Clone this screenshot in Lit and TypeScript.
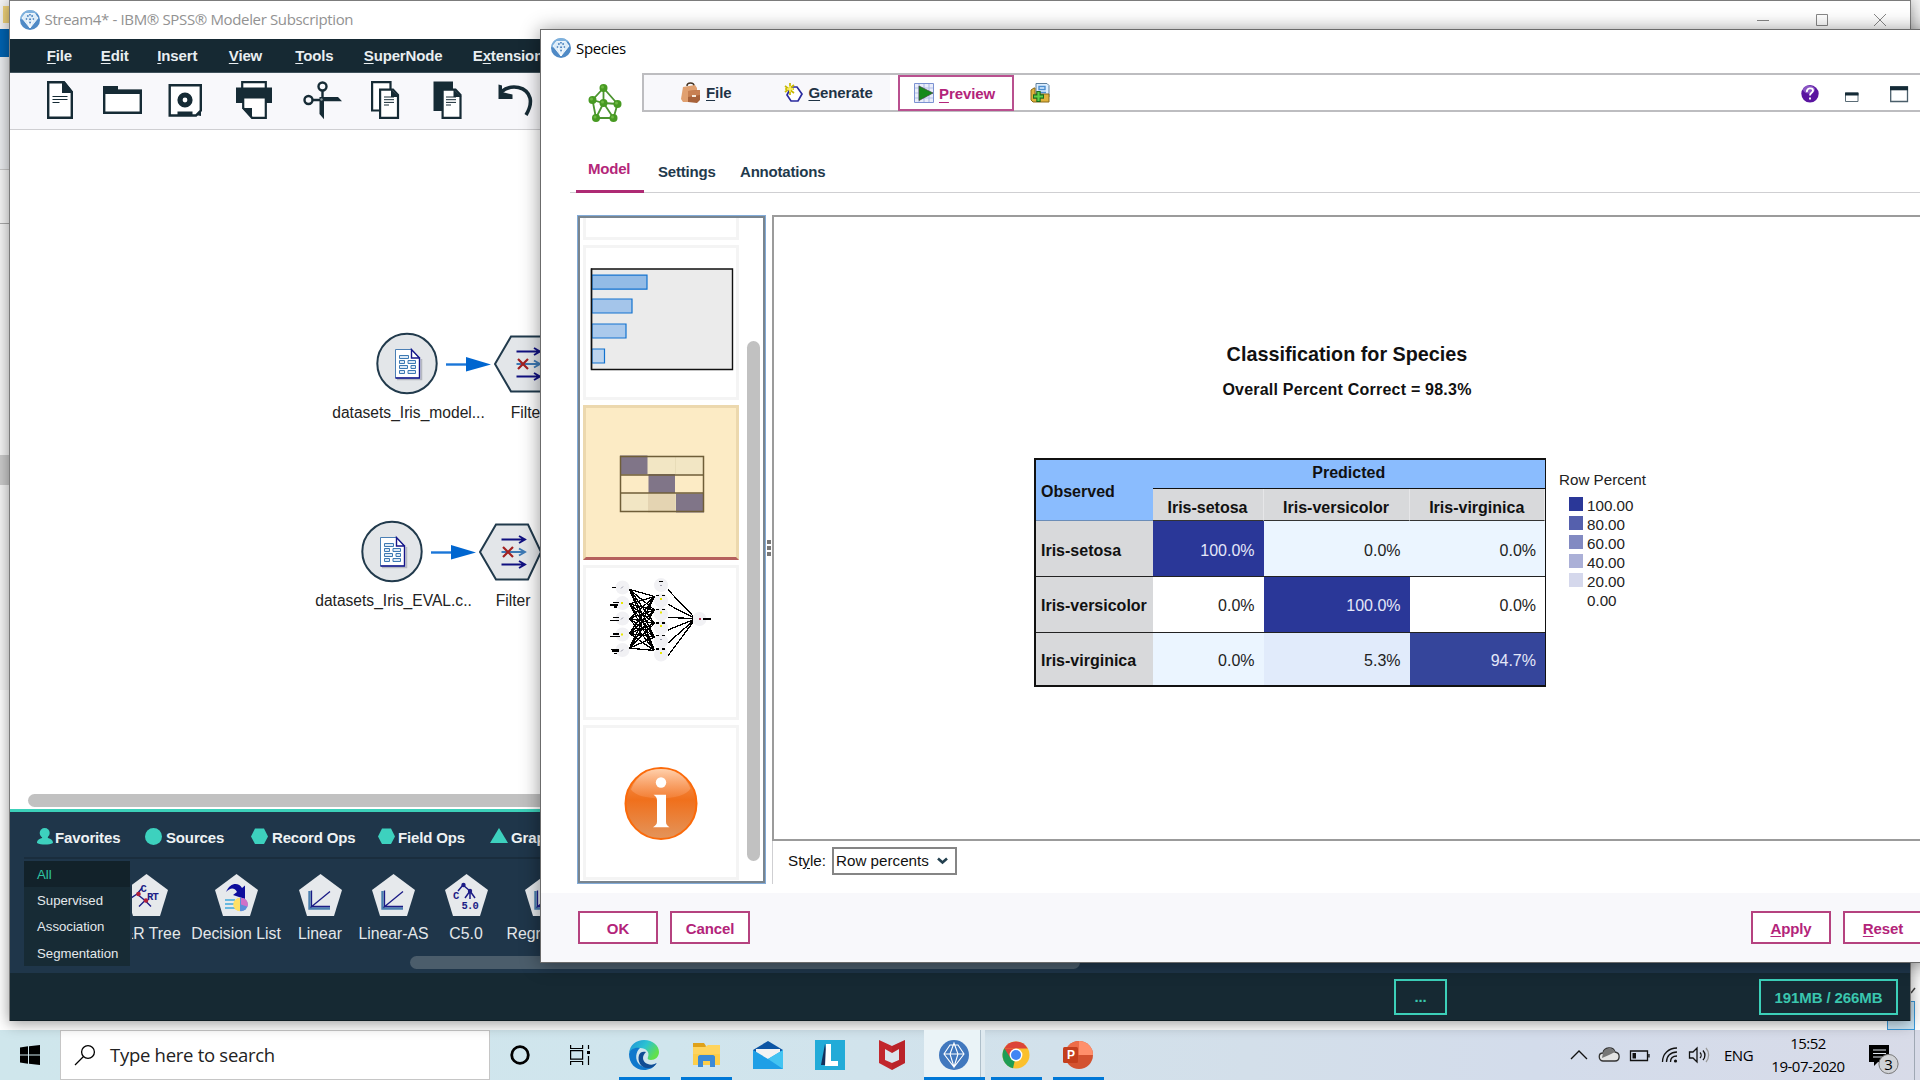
import { LitElement, html, svg, css } from "lit";
import { customElement } from "lit/decorators.js";
import { classMap } from "lit/directives/class-map.js";

const base = css`
  * { box-sizing: border-box; }
  svg { display: block; overflow: visible; flex: none; }
  u { text-decoration: underline; text-underline-offset: 2px; text-decoration-thickness: 1px; }
`;

const gem = (size: number, w = size) => html`
  <svg width=${w} height=${size} viewBox="0 0 20 20" preserveAspectRatio="none">
    <circle cx="10" cy="10" r="10" fill="#4f8ac6" />
    <path d="M0 9A10 10 0 0 1 17 3L14 8 10 3 4 10z" fill="#8dbde4" opacity=".75" />
    <path d="M5.5 3.5h9L18 8l-8 10L2 8z" fill="#dcecf8" />
    <path d="M5.5 3.5h9L18 8l-8 10L2 8zM6.500 8l3.500 10L13.500 8" fill="none" stroke="#fff" stroke-width=".8" />
    <path d="M7 6h1.700M11.300 6H13M9.200 9.200h1.700M5.800 9h1.400M12.700 9h1.400M9.300 12.500h1.500M9.200 4.800h1.500" stroke="#3f79b8" stroke-width="1.400" />
  </svg>`;

/* ---------- main window ---------- */

const MENU = [["", "F", "ile"], ["", "E", "dit"], ["", "I", "nsert"], ["", "V", "iew"], ["", "T", "ools"], ["", "S", "uperNode"], ["E", "x", "tensions"]];

const toolIcons = [
  svg`<path d="M48.200 82.200H64L71.800 92V117.800H48.200z" fill="#fff" stroke="#162b35" stroke-width="2.400"/><path d="M62 82h3l8 10v1H62z" fill="#162b35"/><path d="M52.500 96.500h15M52.500 99.500h15M52.500 102.500h7" stroke="#162b35" stroke-width="1.100"/>`,
  svg`<path d="M104.200 91H140.800V112.800H104.200z" fill="#fff" stroke="#162b35" stroke-width="2.400"/><path d="M103 86h15v3.500h24V94H103z" fill="#162b35"/>`,
  svg`<path d="M169.700 85.200H200.800V110.500L196 115.500H169.700z" fill="#fff" stroke="#162b35" stroke-width="2.400"/><circle cx="185" cy="100" r="5" fill="#fff" stroke="#162b35" stroke-width="5.200"/><path d="M177.500 111.500h15v4h-15zM195.500 115l5.500-5v6z" fill="#162b35"/>`,
  svg`<path d="M242.200 82.200h23.600V92h-23.600z" fill="#fff" stroke="#162b35" stroke-width="2.200"/><path d="M236 87.500h36V103h-36z" fill="#162b35"/><path d="M243.200 97.500h22.600V117.800H252L243.200 108z" fill="#fff" stroke="#162b35" stroke-width="2.200"/><path d="M242 108h10v10z" fill="#162b35"/>`,
  svg`<g fill="none" stroke="#162b35" stroke-width="2.400"><circle cx="322.500" cy="86.500" r="4"/><circle cx="308.500" cy="100" r="4"/><path d="M322.500 90.500V98M312.500 100H320"/></g><path d="M319.500 97H338l4 4.300H324v18L319.500 114z" fill="#162b35"/><circle cx="321.500" cy="99.500" r="1.200" fill="#8d989d"/>`,
  svg`<path d="M372.100 82.100H390.500V110.500H372.100z" fill="#fff" stroke="#162b35" stroke-width="2.200"/><path d="M380.100 89.600H393L398 95V117.800H380.100z" fill="#fff" stroke="#162b35" stroke-width="2.200"/><path d="M391 89l8 8h-8z" fill="#162b35"/><path d="M384 97h10M384 99.700h10M384 102.400h10M384 105h5" stroke="#162b35"/>`,
  svg`<path d="M433.500 81.500H453V111H433.500z" fill="#162b35"/><path d="M442.600 89.600H455.500L460.500 95V117.800H442.600z" fill="#fff" stroke="#162b35" stroke-width="2.200"/><path d="M453.500 89l8 8h-8z" fill="#162b35"/><path d="M446 97h10M446 99.700h10M446 102.400h10M446 105h5" stroke="#162b35"/>`,
  svg`<path d="M501 92C512 83 527 87 530 98 531.500 104 529 110 526 115" fill="none" stroke="#162b35" stroke-width="3.600"/><path d="M498.500 84.500l3.500 1v6.500l10.500 2.500v4.500h-14z" fill="#162b35"/>`,
];

const sourceNode = (cx: number, cy: number, label: string) => svg`
  <circle cx=${cx} cy=${cy} r="29.700" fill="#e3e6e9" stroke="#213a4c" stroke-width="2"/>
  <g transform="translate(${cx - 12} ${cy - 14.500})">
    <path d="M2 30.500h24.500V10" fill="none" stroke="#b4b8c0" stroke-width="1.500"/>
    <path d="M.5.500h16l8 8.500v20H.5z" fill="#fff" stroke="#4a7fb5"/>
    <path d="M.5 29H24.500V9H16.500V.5l8 8.500" fill="none" stroke="#16168a" stroke-width="1.400"/>
    <g fill="#dce9f5" stroke="#3d79b3"><path d="M4.500 6.500h9v3h-9zM4.500 11.500h5v3h-5zM13 11.500h7.500v3H13zM4.500 16.500h8v3h-8zM16 16.500h4.500v3H16zM4.500 21.500h5v3h-5zM13 21.500h7.500v3H13z"/></g>
  </g>
  <text x=${cx + 1.500} y=${cy + 54.500} text-anchor="middle" class="lbl">${label}</text>`;

const filterNode = (cx: number, cy: number) => svg`
  <path d="M${cx - 30} ${cy}L${cx - 14} ${cy - 27.500}H${cx + 18}L${cx + 31} ${cy}L${cx + 18} ${cy + 27.500}H${cx - 14}z" fill="#e3e6e9" stroke="#213a4c" stroke-width="2"/>
  <g fill="none">
    <path d="M${cx - 8.500} ${cy - 12.500}h24M${cx + 9} ${cy - 16}l6 3.500-6 3.500M${cx - 8.500} ${cy + 12.500}h24M${cx + 9} ${cy + 9}l6 3.500-6 3.500" stroke="#101080" stroke-width="1.900"/>
    <path d="M${cx - 8.500} ${cy}h24M${cx + 9} ${cy - 3.500}l6 3.500-6 3.500" stroke="#3d7ab5" stroke-width="1.900"/>
    <path d="M${cx - 7} ${cy - 5}l10 10m0-10l-10 10" stroke="#a32020" stroke-width="2.200"/>
  </g>
  <text x=${cx + 3} y=${cy + 54} text-anchor="middle" class="lbl">Filter</text>`;

const link = (x: number, y: number) => svg`
  <path d="M${x} ${y}h24" stroke="#1a76d8" stroke-width="2.400"/><path d="M${x + 20} ${y - 7.500}L${x + 45} ${y}L${x + 20} ${y + 7}z" fill="#0066d0"/>`;

const axes = svg`<path d="M10.500 17V34.500H31" fill="none" stroke="#4a7fae" stroke-width="2.400"/><path d="M11.500 33.500L31 17.500M12.500 16.500V32.500H31" stroke="#1c1c86" stroke-width="1.300" fill="none"/>`;

const MODELS = [
  { label: "C&R Tree", x: 146.5, art: svg`<g stroke="#1c1c86" stroke-width="1.400" fill="none"><path d="M12 20l8 6.500M12 20l-6 4M12 20l5-6M20 26.500l-6 6M20 26.500l6 6"/></g><circle cx="13.500" cy="20" r="2.300" fill="#b0203a"/><circle cx="21" cy="26.500" r="2.300" fill="#b0203a"/><text x="15.500" y="18" class="mono">C</text><text x="22" y="26" class="mono">RT</text>` },
  { label: "Decision List", x: 236.5, art: svg`<path d="M11 18C15 8 24 8 27 14l3-2.500V25L18 21l4-3C19 13 15 14 11 18z" fill="#0d0d9c"/><path d="M10 26h10M10 30h10M10 34h10" stroke="#3fa9dc" stroke-width="1.700"/><circle cx="26" cy="30.500" r="6.800" fill="#5b8ed8"/><path d="M26 23.700a6.800 6.800 0 0 1 6.500 9L26 30.500z" fill="#d070c8"/><path d="M25 23.700a6.800 6.800 0 0 0 0 13.600z" fill="#ffe066"/>` },
  { label: "Linear", x: 320.5, art: axes },
  { label: "Linear-AS", x: 394, art: axes },
  { label: "C5.0", x: 466.5, art: svg`<path d="M18 11l-5 6M18 11l7 6M25 17l-5 7M25 17v8M25 17l5 7" stroke="#1c1c86" stroke-width="1.500"/><circle cx="18.500" cy="11" r="2.200" fill="#1c1c86"/><circle cx="25" cy="17" r="2.200" fill="#1c1c86"/><text x="8" y="25" class="mono">C</text><text x="16.500" y="34.500" class="mono">5.0</text>` },
  { label: "Regression", x: 547, art: axes },
];

@customElement("stream-window")
export class StreamWindow extends LitElement {
  static styles = [base, css`
    :host { display: flex; flex-direction: column; width: 1902px; height: 1021px; border: solid #7c7c7c; border-width: 1px 1px 0 1px; background: #fff; box-shadow: 0 2px 14px rgba(0,0,0,.42); font-family: "Liberation Sans", Arial, sans-serif; overflow: hidden; }
    .title { height: 38px; display: flex; align-items: center; padding-left: 10px; font: 15px/36px "Open Sans", "Noto Sans", sans-serif; color: #929292; letter-spacing: -.35px; }
    .title span { margin: 0 auto 2px 4.500px; white-space: nowrap; }
    .ctl { display: grid; grid-template-columns: 58px 59px 58px; height: 38px; place-items: center; margin-right: 1px; }
    .menu { height: 34px; flex: none; background: #162933; border-bottom: 1px solid #40525b; display: grid; grid-template-columns: 54px 56.500px 71.500px 66.500px 68.500px 109px 100px; padding-left: 36.800px; font: bold 15px/34px "Liberation Sans", sans-serif; letter-spacing: -.15px; color: #e9eef1; }
    .tools { height: 57px; flex: none; background: #f8f8fb; border-bottom: 1px solid #cfcfd2; }
    .canvas { height: 679px; flex: none; display: flex; flex-direction: column; background: #fff; }
    .lbl { font: 15.600px "Liberation Sans", sans-serif; fill: #222; }
    .mono { font: bold 10.500px "Liberation Mono", monospace; fill: #1c1c86; letter-spacing: -.8px; }
    .hscroll { height: 13px; margin: 0 20px 2px 18px; border-radius: 7px; background: #c1c1c1; flex: none; }
    .palette { height: 164px; flex: none; border-top: 3px solid #3cd0b9; background: #1f364a; padding-left: 14px; }
    .tabs { height: 47px; border-bottom: 2px solid #1a2d3d; display: grid; grid-template-columns: 108px 106px 127px 112px 120px; padding-left: 13px; font: bold 15px/49px "Liberation Sans", sans-serif; letter-spacing: -.15px; color: #eef2f4; }
    .tab { display: flex; align-items: center; gap: 3px; white-space: nowrap; height: 48px; }
    .tab span { padding-top: 2px; }
    .body { display: flex; height: 114px; }
    .groups { width: 106px; height: 105px; margin-top: 2px; background: #172b35; color: #e4e9ec; font-size: 13.200px; letter-spacing: 0; }
    .group { height: 26.200px; line-height: 27px; padding-left: 13px; }
    .group.on { background: #12222a; color: #2fc7a4; }
    .strip { position: relative; width: 1700px; margin-left: 2px; overflow: hidden; }
    .model { position: absolute; top: 15px; width: 120px; margin-left: -60px; display: flex; flex-direction: column; align-items: center; gap: 7px; font: 15.800px/22px "Liberation Sans", sans-serif; color: #e4e8ea; white-space: nowrap; }
    .thumb { position: absolute; left: 278px; top: 97px; width: 670px; height: 13px; border-radius: 7px; background: #4b5d6b; }
    .status { height: 48px; flex: none; background: #162933; border-bottom: 1px solid #0e1c23; display: flex; justify-content: flex-end; padding: 6px 12px 0 0; gap: 312px; }
    .chip { height: 36px; border: 2px solid #3cd0b9; color: #3ac6ae; font: bold 15px/33px "Liberation Sans", sans-serif; letter-spacing: -.1px; text-align: center; width: 139px; }
    .chip.dots { width: 53px; line-height: 32px; }
  `];

  private tab(shape: unknown, name: string, w = 18) {
    return html`<div class="tab"><svg width=${w} height="17" viewBox="0 0 ${w} 17" fill="#3dd1be">${shape}</svg><span>${name}</span></div>`;
  }

  render() {
    return html`
      <div class="title">${gem(20)}<span>Stream4* - IBM® SPSS® Modeler Subscription</span>
        <div class="ctl">
          <svg width="12" height="12"><path d="M0 6.500h12" stroke="#888"/></svg>
          <svg width="12" height="12"><path d="M.5.500h11v11H.5z" fill="none" stroke="#888"/></svg>
          <svg width="12" height="12"><path d="M0 0l12 12M12 0L0 12" stroke="#888"/></svg>
        </div>
      </div>
      <div class="menu">${MENU.map(([a, b, c]) => html`<span>${a}<u>${b}</u>${c}</span>`)}</div>
      <div class="tools"><svg width="540" height="56" viewBox="10 73 540 56">${toolIcons}</svg></div>
      <div class="canvas">
        <svg width="560" height="664" viewBox="10 130 560 664">
          ${sourceNode(407, 363.5, "datasets_Iris_model...")}${link(446, 364.5)}${filterNode(525, 364)}
          ${sourceNode(392, 551.5, "datasets_Iris_EVAL.c..")}${link(431, 552.5)}${filterNode(510, 552)}
        </svg>
        <div class="hscroll"></div>
      </div>
      <div class="palette">
        <div class="tabs">
          ${this.tab(svg`<circle cx="7.700" cy="5" r="5"/><path d="M5.500 7h4.500l1 3c4 1 5 3 5 5-4 2-12 2-16 0 0-2 1-4 5-5z"/>`, "Favorites", 15)}
          ${this.tab(svg`<circle cx="8.500" cy="8.500" r="8.500"/>`, "Sources")}
          ${this.tab(svg`<path d="M4 .5h9L17 8.500l-4 7.500H4L0 8.500z"/>`, "Record Ops")}
          ${this.tab(svg`<path d="M4 .5h9L17 8.500l-4 7.500H4L0 8.500z"/>`, "Field Ops", 17)}
          ${this.tab(svg`<path d="M9 0l9 15H0z"/>`, "Graphs")}
        </div>
        <div class="body">
          <div class="groups">
            ${["All", "Supervised", "Association", "Segmentation"].map((g, i) => html`<div class=${classMap({ group: true, on: i === 0 })}>${g}</div>`)}
          </div>
          <div class="strip">
            ${MODELS.map(m => html`<div class="model" style="left:${m.x - 132.5}px">
              <svg width="43" height="42" viewBox="0 0 43 42"><path d="M21.500 0L43 16 35 42H8L0 16z" fill="#e6e9ec"/>${m.art}</svg><span>${m.label}</span></div>`)}
            <div class="thumb"></div>
          </div>
        </div>
      </div>
      <div class="status"><div class="chip dots">...</div><div class="chip">191MB / 266MB</div></div>`;
  }
}

/* ---------- species dialog ---------- */

const HIDDEN = [584.6, 600, 613.6, 627, 640.6, 654];
const INPUTS = [587, 602.6, 618, 634, 649.5];

const networkThumb = svg`
  ${INPUTS.map(y => svg`<circle cx="622.500" cy=${y} r="7" fill="#f1f1f4"/>`)}
  ${HIDDEN.map(y => svg`<circle cx="661" cy=${y} r="7" fill="#f1f1f4"/>`)}
  <circle cx="699.500" cy="618.500" r="7" fill="#f1f1f4"/>
  <g stroke="#000" stroke-width="1.300" shape-rendering="crispEdges">
    ${INPUTS.map(a => HIDDEN.slice(1).map(b => svg`<path d="M629.500 ${a + (618 - a) * .06}L654.500 ${b - 4}"/>`))}
    ${HIDDEN.map(b => svg`<path d="M668 ${b + 3 + (618 - b) * .05}L693 ${618.5 + (b - 618) * .09}"/>`)}
    <path d="M612 587h4M613 602h6M610 604.500h8M614 606.500h3M613 617h6M610 620h9M613 633.500h6M610 636h10M611 649h8M612 650.500h7M614 653h3M703 618.500h8M658.500 581h4M656 595h3M661.500 595h3M656 609h3M661.500 609h3M656 622.500h3M661.500 622.500h3M656 635h3M661.500 635h3M656 648.500h3M661.500 648.500h3"/>
  </g>
  <path d="M621 602.500h2M621 634h2M660 598.500h2M660 612h2M660 625.500h2M660 652.500h2" stroke="#e8e800" stroke-width="2"/>
  <path d="M699 618.500h2" stroke="#b03050" stroke-width="2"/><path d="M621 588l2-2M621 619l2-2M621 651l2-2M660 585h2M660 639h2" stroke="#99a" stroke-width="1"/>`;

const chartThumb = svg`
  <path d="M591.500 268.500h141v100.500h-141z" fill="#ebebeb" stroke="#111" stroke-width="1.400"/>
  <g stroke="#1272cf" stroke-width="1.200"><path d="M592 274.700h55v14h-55z" fill="#93bbe6"/><path d="M592 298.500h40v14h-40z" fill="#a4c5ea"/><path d="M592 323.500h34v14h-34z" fill="#aac9ec"/><path d="M592 348.500h12.500v14H592z" fill="#bdd4ee"/></g>
  <path d="M591.500 268v101" stroke="#111" stroke-width="1.400"/>`;

const matrixThumb = svg`
  <path d="M620 455h84v19.500h-84zM620 493h84v19h-84z" fill="#f2e6c4"/>
  <path d="M648 493h28v19h-28z" fill="#e4d4b2"/>
  <path d="M620 455h27.500v19H620zM648.500 473.500h26.500v19h-26.500zM676 493h28v19h-28z" fill="#807588"/>
  <path d="M675.500 456v18M675.500 493v18" stroke="#e8dcb8"/>
  <path d="M620.500 456h83v55h-83zM620 474.500h84M620 492.500h84" fill="none" stroke="#6f5e38" stroke-width="1.500"/>`;

const infoThumb = svg`
  <defs><linearGradient id="og" x1="0" y1="0" x2="0" y2="1"><stop offset="0" stop-color="#f79a5c"/><stop offset=".45" stop-color="#f0701c"/><stop offset="1" stop-color="#e3955c"/></linearGradient>
  <linearGradient id="gl" x1="0" y1="0" x2="0" y2="1"><stop offset="0" stop-color="#ffd0ac"/><stop offset="1" stop-color="#f79050" stop-opacity=".45"/></linearGradient></defs>
  <circle cx="661" cy="803" r="35.500" fill="url(#og)" stroke="#fb6a0a" stroke-width="2"/>
  <path d="M631 789C637 774 648 768.500 661 768.500S685 774 690.500 788C684 801 638 801 631 789z" fill="url(#gl)"/>
  <circle cx="661" cy="782" r="5.200" fill="#fff"/>
  <path d="M653.500 794.200H666V821c0 3 1 4 3.500 5.700h-16.500c2.500-1.700 4-2.700 4-5.700V800c0-3-1-4-3.500-5.800z" fill="#fff"/>`;

const THUMBS = [
  { art: chartThumb, top: 245.5, on: false }, { art: matrixThumb, top: 405.5, on: true },
  { art: networkThumb, top: 565.5, on: false }, { art: infoThumb, top: 725.5, on: false },
];

const SPECIES = ["Iris-setosa", "Iris-versicolor", "Iris-virginica"];
const ROWS = [
  { cells: ["100.0%", "0.0%", "0.0%"], tone: ["full", "pale", "pale"] },
  { cells: ["0.0%", "100.0%", "0.0%"], tone: ["none", "full", "none"] },
  { cells: ["0.0%", "5.3%", "94.7%"], tone: ["pale", "low", "high"] },
];
const LEGEND = [["100.00", "#2a3798"], ["80.00", "#5560ad"], ["60.00", "#828ac2"], ["40.00", "#abb0d7"], ["20.00", "#d5d8ec"], ["0.00", "#ffffff"]];

@customElement("species-dialog")
export class SpeciesDialog extends LitElement {
  static styles = [base, css`
    :host { display: flex; flex-direction: column; width: 1400px; height: 934px; background: #fff; border: solid #6b6b6b; border-width: 1px; box-shadow: 0 1px 18px rgba(0,0,0,.42); font-family: "Liberation Sans", Arial, sans-serif; color: #111; }
    .title { height: 36px; display: flex; align-items: center; gap: 5px; padding-left: 10px; font: 15px/36px "Open Sans", sans-serif; letter-spacing: -.35px; color: #000; }
    .head { height: 64px; display: flex; padding: 7px 0 0 46px; }
    .head > svg { margin: 10px 21px 0 0; }
    .bar { flex: 1; height: 39px; border: solid #bdbdc0; border-width: 2px 0 2px 2px; display: flex; align-items: center; font: bold 15px/35px "Liberation Sans", sans-serif; letter-spacing: -.1px; color: #1f3345; }
    .file { display: flex; align-items: center; background: #f8f8fb; height: 35px; width: 246px; padding-left: 37px; gap: 5px; }
    .file svg + span + svg { margin-left: 49px; }
    .preview { margin-left: 8px; width: 116px; height: 36px; border: 2px solid #b9508f; color: #b3247a; display: flex; align-items: center; gap: 5px; padding-left: 14px; }
    .preview span { padding-top: 1px; }
    .preview u { text-underline-offset: 3px; }
    .add { margin-left: 16px; }
    .win { margin: 0 -1px 0 auto; }
    .nav { height: 63px; margin-left: 29px; border-bottom: 1px solid #cfcfd2; display: flex; align-items: flex-end; font: bold 15px/20px "Liberation Sans", sans-serif; letter-spacing: -.2px; color: #1f3a4c; }
    .nav div { height: 31px; margin-bottom: -1px; }
    .nav .on { margin-left: 6px; width: 68px; height: 34px; padding-left: 12px; border-bottom: 3px solid #ae2a74; color: #b4267a; }
    .nav .s { margin-left: 14px; width: 82px; }
    .main { height: 701px; padding: 22px 0 0 36px; display: flex; }
    .side { width: 189px; height: 669px; border: 1px solid #82abd8; }
    .inner { height: 667px; border: 2px solid #79858f; overflow: hidden; display: flex; padding-left: 3px; }
    .cards { width: 156px; display: flex; flex-direction: column; gap: 5px; margin-top: -2px; }
    .card { height: 155px; flex: none; border: 3px solid #f4f4f4; }
    .card svg { margin: -2px -3px -3px; }
    .card.first { height: 24px; border-top: 0; }
    .card.on { background: #fcebc5; border-color: #ecd8ae; border-bottom-color: #b5605d; }
    .vthumb { width: 13px; height: 520px; margin: 123px 0 0 8px; border-radius: 7px; background: #c1c1c1; }
    .grip { width: 6px; display: flex; flex-direction: column; gap: 2px; padding: 325px 0 0 1px; }
    .grip i { width: 4px; height: 4px; background: #777; }
    .view { flex: 1; display: flex; flex-direction: column; }
    .chart { height: 626px; border: solid #9b9b9b; border-width: 2px 0 2px 2px; padding: 0 0 0 260px; display: flex; flex-direction: column; }
    .h1, .h2 { margin-left: 2px; width: 622px; text-align: center; font: bold 19.800px/24px "Liberation Sans", sans-serif; }
    .h1 { margin-top: 125px; }
    .h2 { margin-top: 12px; font-size: 16px; letter-spacing: .22px; }
    .row { display: flex; margin-top: 56px; }
    .table { width: 512px; height: 229px; border: 2px solid #111; border-right-width: 1.500px; display: grid; grid-template-columns: 116.500px 111px 146px 1fr; grid-template-rows: 29.500px 32px 55.500px 56px 1fr; font-size: 16px; }
    .ob { grid-row: 1 / 3; background: #8abcfe; font-weight: bold; display: flex; align-items: center; padding: 4px 0 0 5px; border-bottom: 1px solid #6b8db8; }
    .pr { grid-column: 2 / 5; background: #8abcfe; border-bottom: 1.500px solid #111; font-weight: bold; text-align: center; line-height: 26px; }
    .th { background: #d8d9db; font-weight: bold; text-align: center; line-height: 37px; border-right: 1px solid #e6e6e8; border-bottom: 1.500px solid #333; white-space: nowrap; overflow: hidden; }
    .rh { background: #d8d9db; font-weight: bold; display: flex; align-items: center; padding: 4px 0 0 5px; border-bottom: 1.500px solid #222; white-space: nowrap; }
    .td { display: flex; align-items: center; justify-content: flex-end; padding: 4px 9px 0 0; border-bottom: 1.500px solid #222; color: #222; }
    .last { border-bottom: 0; padding-top: 4px; }
    .full { background: #2a3798; color: #e4e7f8; }
    .high { background: #35459b; color: #e4e7f8; }
    .pale { background: #ebf5ff; }
    .low { background: #e1ebfb; }
    .legend { margin: 11px 0 0 13px; font: 15.200px/19px "Liberation Sans", sans-serif; color: #222; }
    .lt { line-height: 22px; margin-bottom: 5px; white-space: nowrap; }
    .li { display: flex; align-items: center; gap: 4px; padding-left: 10px; height: 19.100px; }
    .sw { width: 14px; height: 14px; margin-top: -3px; }
    .opts { flex: none; height: 43px; border-left: 1px solid #cfcfd2; display: flex; align-items: flex-start; padding: 6px 0 0 15px; font-size: 15.200px; line-height: 28px; gap: 6px; }
    .sel { width: 125px; height: 28px; border: 2px solid #858585; padding: 0 7px 0 2px; line-height: 25px; display: flex; align-items: center; justify-content: space-between; white-space: nowrap; }
    .foot { height: 69px; background: #f8f8fb; display: flex; padding: 18px 0 0 37px; gap: 12px; flex: none; }
    .btn { width: 80px; height: 33px; border: 2px solid #b5427f; background: #fff; color: #b3247a; font: bold 15px/31px "Liberation Sans", sans-serif; letter-spacing: -.1px; text-align: center; flex: none; }
    .push { margin-left: 989px; }
  `];

  render() {
    return html`
      <div class="title">${gem(20)}<span>Species</span></div>
      <div class="head">
        <svg width="34" height="40" viewBox="587 83 34 40">
          <path d="M603.500 88L592.500 100 596 118H613.500L617.500 104zM603.500 88V103M592.500 100L603.500 103 617.500 104M603.500 103L596 118M603.500 103L613.500 118" fill="none" stroke="#4c9430" stroke-width="1.800"/>
          <g fill="#479a22">${[[603.5, 88], [592.5, 100], [603.5, 103], [617.5, 104], [596, 118], [613.5, 118]].map(([x, y]) => svg`<circle cx=${x} cy=${y} r="4"/><circle cx=${x - 1} cy=${y - 1} r="1.500" fill="#6cb842"/>`)}</g>
        </svg>
        <div class="bar">
          <div class="file">
            <svg width="20" height="20" viewBox="0 0 20 20"><path d="M6 3c0-4 7-4 7 0" fill="none" stroke="#443322" stroke-width="1.500"/><path d="M2 4l12-2 2 3v14H2L0 16z" fill="#e0a070"/><path d="M7 8l12-1v10l-3 3-9-1z" fill="#a8623a"/><path d="M7 8l12-1v5l-12 2z" fill="#c88052"/><path d="M11 12h4v2h-4z" fill="#f6e8d8"/></svg>
            <span><u>F</u>ile</span>
            <svg width="18" height="20" viewBox="0 0 18 20"><path d="M6 4h6l5 7-4 7H6l-4-6z" fill="#fff" stroke="#2a2a9e" stroke-width="1.700"/><path d="M5 0v12M0 3l9 7M0 9l9-7M0 6h9" stroke="#c8b800" stroke-width="1.700"/><path d="M5 3v6M2 6h6" stroke="#fff36b" stroke-width="1.500"/></svg>
            <span><u>G</u>enerate</span>
          </div>
          <div class="preview">
            <svg width="20" height="20" viewBox="0 0 20 20"><path d="M.5.500h19v19H.5z" fill="#e9edfa" stroke="#7c92d2"/><path d="M5 1v18M10 1v18M15 1v18M1 5h18M1 10h18M1 15h18" stroke="#b3c0e8" stroke-width="1.200"/><path d="M5 3l14 7L5 17.500z" fill="#158a1a" stroke="#444" stroke-width=".7"/></svg>
            <span><u>P</u>review</span>
          </div>
          <svg class="add" width="20" height="20" viewBox="0 0 20 20"><path d="M6 .5h11l2 2V14H6z" fill="#dceeff" stroke="#5d7f9d"/><path d="M9 3.500h6v3H9zM9 9.500h7" fill="none" stroke="#4d8fd0" stroke-width="1.400"/><path d="M1 7l3-2h1v6h14v8H3L1 17z" fill="#e0b23c" stroke="#8a6a18"/><path d="M8.500 8v11M3 13.500h11" stroke="#1c6a1c" stroke-width="4.400"/><path d="M8.500 9v9M4 13.500h9" stroke="#5cd04a" stroke-width="2.200"/></svg>
          <svg class="win" width="139" height="36" viewBox="1801 74 139 36">
            <circle cx="1810" cy="92.800" r="8.700" fill="#5a14a0"/><ellipse cx="1809" cy="88.500" rx="6" ry="4" fill="#8a56c4"/>
            <path d="M1807 91c-1-4 6-5 6-1.500 0 2.500-3 2-3 5M1810 96.500v2" fill="none" stroke="#fff" stroke-width="1.900"/>
            <path d="M1845.500 92h12.500v8.500h-12.500z" fill="#fff" stroke="#5a6c76"/><path d="M1845 91.500h13.500v3H1845z" fill="#142a36"/>
            <path d="M1890.700 86h16.800v14.500h-16.800z" fill="#fff" stroke="#4a5e6a" stroke-width="1.300"/><path d="M1890 85.300h18v4h-18z" fill="#142a36"/>
          </svg>
        </div>
      </div>
      <div class="nav"><div class="on">Model</div><div class="s">Settings</div><div>Annotations</div></div>
      <div class="main">
        <div class="side"><div class="inner">
          <div class="cards"><div class="card first"></div>
            ${THUMBS.map(t => html`<div class=${classMap({ card: true, on: t.on })}><svg width="156" height="152" viewBox="583 ${t.top} 156 152">${t.art}</svg></div>`)}
          </div>
          <div class="vthumb"></div>
        </div></div>
        <div class="grip"><i></i><i></i><i></i></div>
        <div class="view">
          <div class="chart">
            <div class="h1">Classification for Species</div>
            <div class="h2">Overall Percent Correct = 98.3%</div>
            <div class="row">
              <div class="table">
                <div class="ob">Observed</div><div class="pr">Predicted</div>
                ${SPECIES.map(s => html`<div class="th">${s}</div>`)}
                ${ROWS.map((r, i) => html`<div class=${classMap({ rh: true, last: i === 2 })}>${SPECIES[i]}</div>${r.cells.map((c, j) => html`<div class=${classMap({ td: true, last: i === 2, [r.tone[j]]: true })}>${c}</div>`)}`)}
              </div>
              <div class="legend"><div class="lt">Row Percent</div>
                ${LEGEND.map(([v, c]) => html`<div class="li"><div class="sw" style="background:${c}"></div>${v}</div>`)}
              </div>
            </div>
          </div>
          <div class="opts"><span>St<u>y</u>le:</span><div class="sel">Row percents
            <svg width="11" height="8" viewBox="0 0 11 8"><path d="M1 1.500l4.500 4 4.500-4" fill="none" stroke="#23404f" stroke-width="2.600"/></svg></div></div>
        </div>
      </div>
      <div class="foot"><div class="btn">OK</div><div class="btn">Cancel</div><div class="btn push"><u>A</u>pply</div><div class="btn"><u>R</u>eset</div></div>`;
  }
}

/* ---------- taskbar ---------- */

const APPS = [
  { run: true, on: false, art: svg`<defs><linearGradient id="eg" x1="0" y1="0" x2="1" y2=".5"><stop offset="0" stop-color="#1f8fd8"/><stop offset=".55" stop-color="#2cc3d2"/><stop offset="1" stop-color="#62e04a"/></linearGradient></defs><path d="M0 13C1 5 7 0 15 0c9 0 15 6 15 12 0 5-4 8-8 8-3 0-4-1-3-3 2-5-2-9-8-9-5 0-9 2-11 5z" fill="url(#eg)"/><path d="M0 14c1-5 6-7 11-6-4 3-6 12 0 17 4 3 10 3 16-2-2 5-7 7-12 7C6 30 0 23 0 14z" fill="#0f78cc"/><path d="M10 15c-2 6 2 14 10 13 3 0 6-2 8-5-7 4-14 0-14-5 0-2 1-4 3-6-3-1-6 0-7 3z" fill="#104c94"/>` },
  { run: true, on: false, art: svg`<path d="M2 3h11l2 3v4H2z" fill="#dfa11a"/><path d="M2 7h12l3-2h12v20H2z" fill="#ffd45e"/><path d="M2 14h27v11H2z" fill="#fbc93d" opacity=".6"/><path d="M7 27V17c0-1 1-2 2-2h13c1 0 2 1 2 2v10h-5v-6h-7v6z" fill="#3b8ad6"/>` },
  { run: false, on: false, art: svg`<path d="M0 10L15 1l15 9v3H0z" fill="#0c55a4"/><path d="M3 9h24v11H3z" fill="#f3f3f3"/><path d="M0 10l15 9L30 10v19H0z" fill="#1f9fe6"/><path d="M15 19L30 10v19z" fill="#43c4f2"/>` },
  { run: false, on: false, art: svg`<path d="M0 0h30v30H0z" fill="#22abd8"/><path d="M10 4L6 25h8z" fill="#12305c"/><path d="M11 4h5v17h7v5H10z" fill="#fff"/>` },
  { run: false, on: false, art: svg`<path d="M2 0l13 6 13-6v23l-13 7-13-7z" fill="#c2272d"/><path d="M8 9l7 4 7-4v11l-7 3-7-3z" fill="#dbe6ee"/><path d="M15 6l13-6v23l-13 7v-7l7-3V9l-7 4z" fill="#a81c22" opacity=".3"/>` },
  { run: true, on: true, art: svg`<circle cx="15" cy="15" r="15" fill="#4178be"/><path d="M11 5h8l6 9-10 13L5 14zM5 14h20M11 14l4 13 4-13M11 14l4-11 4 11" fill="none" stroke="#fff" stroke-width="1.100"/>` },
  { run: true, on: false, art: svg`<circle cx="15" cy="15" r="13.500" fill="#fbc02d"/><path d="M15 15L3.300 8.200A13.500 13.500 0 0 0 12 28.200z" fill="#1f9d55"/><path d="M3.300 8.200A13.500 13.500 0 0 1 26.700 8.500H15z" fill="#dc4437"/><path d="M3.300 8.200L9.500 18 15 8.500z" fill="#dc4437"/><circle cx="15" cy="15" r="6.400" fill="#fff"/><circle cx="15" cy="15" r="5" fill="#4285f4"/>` },
  { run: true, on: false, art: svg`<circle cx="16" cy="15" r="14" fill="#d35230"/><path d="M16 1a14 14 0 0 1 14 14H16z" fill="#ff8f6b"/><path d="M2 15A14 14 0 0 1 16 1v14z" fill="#ed6c47"/><rect x="0" y="7" width="15" height="16" rx="1.500" fill="#c43e1c"/>` },
];

@customElement("task-bar")
export class TaskBar extends LitElement {
  static styles = [base, css`
    :host { display: flex; width: 1920px; height: 50px; background: linear-gradient(90deg, #cfe6ec, #d0e5ed 35%, #d3dfea 65%, #d3dceb 80%, #d8dbe8); font-family: "Open Sans", "Noto Sans", sans-serif; color: #000; }
    .start { width: 60px; padding: 15px 0 0 20px; }
    .search { width: 430px; background: #fff; border: 1px solid #c6c6c6; display: flex; align-items: center; padding-left: 14px; gap: 15px; font-size: 18.500px; letter-spacing: -.28px; color: #222; }
    .search span { padding-bottom: 1px; }
    .sys { width: 60px; display: flex; align-items: center; justify-content: center; flex: none; }
    .sys.view { width: 69px; padding-right: 9px; }
    .app { width: 51px; margin-right: 11px; display: flex; justify-content: center; padding: 10px 1px 0 0; height: 50px; flex: none; position: relative; }
    .app.run { border-bottom: 3px solid #0078d7; }
    .app.on { width: 61px; margin: 0 6px 0 -5px; background: linear-gradient(90deg, #eaf3f7 56px, #aebfca 56px, #aebfca 57px, #dfeaf0 57px); }
    .pp { position: absolute; left: 14px; top: 17px; font: bold 12px/16px "Liberation Sans", sans-serif; color: #fff; }
    .tray { margin-left: auto; display: flex; align-items: center; }
    .lang { margin: 0 17px 0 14px; font-size: 15px; letter-spacing: -.5px; width: 29px; }
    .clock { width: 76px; text-align: center; font-size: 15px; line-height: 23px; letter-spacing: -.5px; white-space: nowrap; margin-right: 23px; }
    .peek { height: 50px; width: 6px; border-left: 1px solid #9fa8b4; margin-left: 4px; }
  `];

  render() {
    return html`
      <div class="start"><svg width="20" height="20" viewBox="0 0 20 20"><path d="M0 2.500l8-1.200V9.500H0zM9 1.200L20 0v9.500H9zM0 10.500h8v8.200L0 17.500zM9 10.500h11V20L9 18.800z"/></svg></div>
      <div class="search"><svg width="20" height="20" viewBox="0 0 20 20" fill="none" stroke="#000" stroke-width="1.300"><circle cx="13" cy="7" r="6.400"/><path d="M8.500 11.500L0 20"/></svg><span>Type here to search</span></div>
      <div class="sys"><svg width="20" height="20"><circle cx="10" cy="10" r="8.300" fill="none" stroke="#000" stroke-width="2.800"/></svg></div>
      <div class="sys view"><svg width="20" height="20" viewBox="0 0 20 20" fill="none" stroke="#000" stroke-width="1.200"><path d="M.6 0v3.500h12V0M.6 5.600h12v8.500H.6zM.6 20v-3.500h12V20M18.500 0v4M18.500 11v9"/><path d="M17 6h3v3h-3z" fill="#000" stroke="none"/></svg></div>
      ${APPS.map((a, i) => html`<div class=${classMap({ app: true, run: a.run, on: a.on })}><svg width="30" height="30" viewBox="0 0 30 30">${a.art}</svg>${i === 7 ? html`<span class="pp">P</span>` : ""}</div>`)}
      <div class="tray">
        <svg width="140" height="24" viewBox="1573 1043 140 24" fill="none" stroke="#111" stroke-width="1.300">
          <path d="M1574 1059l8-8 8 8"/>
          <path d="M1606 1061c-5-1-5-8 0-8 1-6 10-7 12-1 6 1 5 9 0 9z" fill="#e4e4e4" stroke="#333"/><path d="M1606 1053c2-6 10-6 12-1l-6 3-7 3z" fill="#777" stroke="none"/>
          <path d="M1633.500 1051h17v9.500h-17zM1652 1054v3.500"/><path d="M1635.500 1053h3.500v5.500h-3.500z" fill="#111" stroke="none"/>
          <path d="M1665.500 1062c0-8 6-14 14.500-14M1669.500 1062c0-6 4-10 10.500-10M1673.500 1062c0-4 2-6 6.500-6"/><circle cx="1678.500" cy="1061" r="1.600" fill="#111" stroke="none"/>
          <path d="M1692.500 1052h3.500l4-4v14l-4-4h-3.500zM1703 1052.500c1.500 1.500 1.500 4 0 5.500M1706 1050.500c2.500 3 2.500 6.500 0 9.500"/><path d="M1709 1048c3.500 4 3.500 10 0 14" stroke="#999"/>
        </svg>
        <span class="lang">ENG</span>
        <div class="clock">15:52<br />19-07-2020</div>
        <svg width="41" height="34" viewBox="1869 1038 41 34">
          <path d="M1869 1045h20v17h-11l-4 4v-4h-5z" fill="#000"/><path d="M1873 1050h13M1873 1053.500h13M1873 1057h9" stroke="#dfe6ee" stroke-width="1.200"/>
          <circle cx="1888.500" cy="1064" r="9.600" fill="#d0d2d6" stroke="#777" stroke-width="1"/>
          <text x="1888.500" y="1069.500" text-anchor="middle" font-size="15" font-family="Open Sans, sans-serif">3</text>
        </svg>
        <div class="peek"></div>
      </div>`;
  }
}

@customElement("app-root")
export class AppRoot extends LitElement {
  static styles = [base, css`
    :host { display: block; position: relative; width: 1920px; height: 1080px; overflow: hidden; background: #fff; }
    .back { width: 1920px; height: 1030px; display: flex; flex-direction: column; background: #f6f6f6; }
    .b1 { height: 29px; background: #f4f4f4; padding: 6px 0 0 3px; }
    .fold { width: 8px; height: 17px; background: #efd27a; }
    .b2 { height: 28px; background: #0063b1; width: 10px; }
    .b3 { height: 113px; background: #eaecef; border-bottom: 1px solid #c8c8c8; }
    .b4 { height: 54px; border-bottom: 1px solid #aaa; }
    .b5 { height: 231px; }
    .b6 { height: 30px; width: 10px; background: #cbcbcb; }
    .b7 { flex: 1; }
    .b8 { height: 340px; background: #fff; }
    .main, .dlg, .cell { position: absolute; }
    .main { left: 9px; top: 0; }
    .dlg { left: 540px; top: 29px; }
    .cell { left: 1887px; top: 1001px; width: 28px; height: 29px; background: #cde6f5; border: 1px solid #3a9bdc; }
    .edge { position: absolute; left: 1911px; top: 987px; }
  `];

  render() {
    return html`
      <div class="back"><div class="b1"><div class="fold"></div></div><div class="b2"></div><div class="b3"></div><div class="b4"></div><div class="b5"></div><div class="b6"></div><div class="b7"></div><div class="b8"></div></div>
      <div class="cell"></div>
      <svg class="edge" width="6" height="8"><path d="M0 6L4 1" stroke="#444" stroke-width="1.500"/></svg>
      <stream-window class="main"></stream-window>
      <species-dialog class="dlg"></species-dialog>
      <task-bar></task-bar>`;
  }
}
